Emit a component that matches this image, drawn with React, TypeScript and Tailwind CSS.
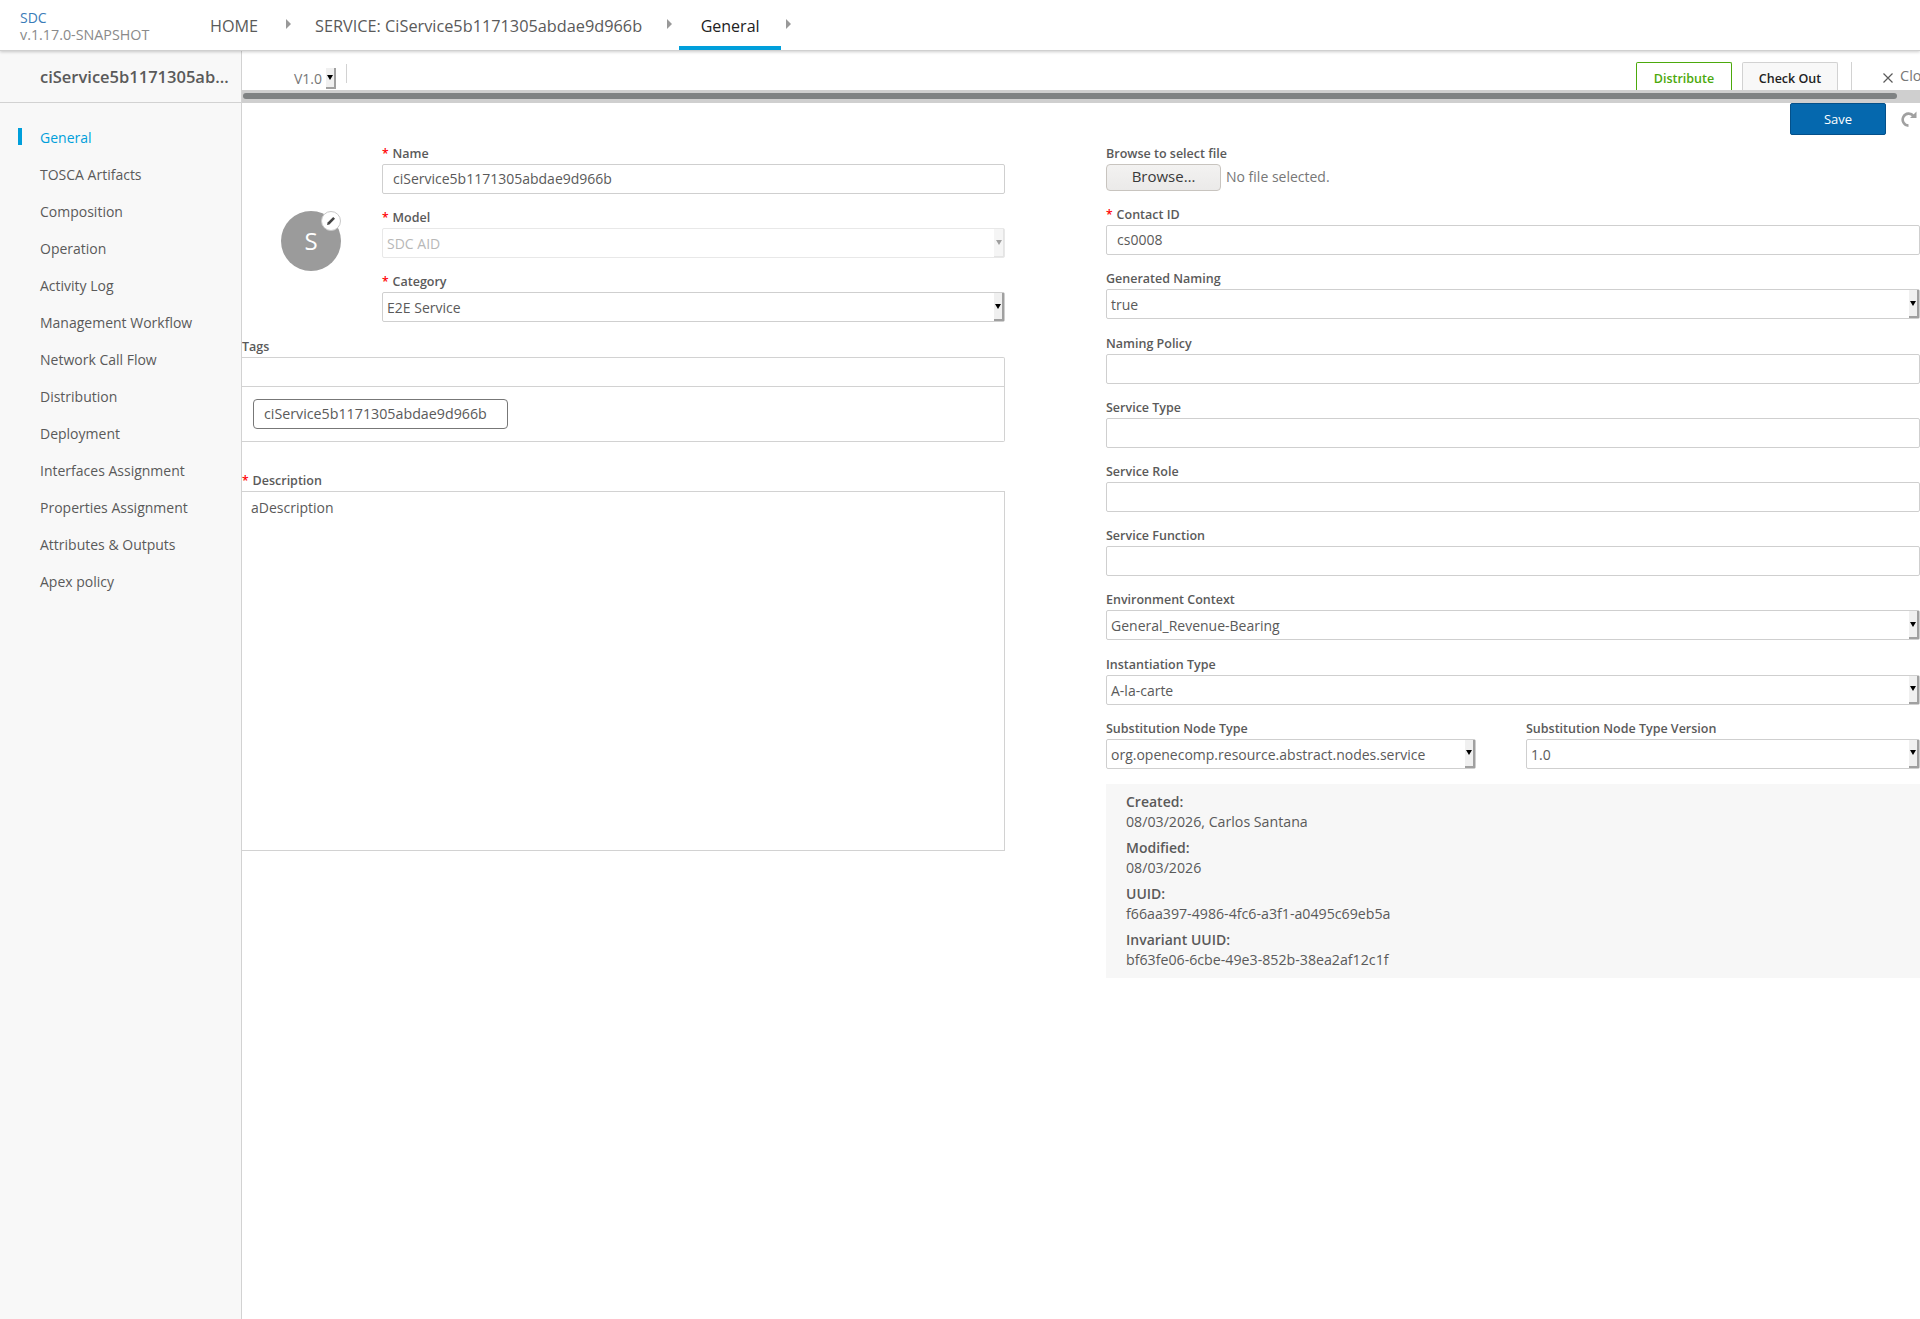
import React from 'react';

const FONT = "font-['Open_Sans',sans-serif]";

const navItems = [
  'General',
  'TOSCA Artifacts',
  'Composition',
  'Operation',
  'Activity Log',
  'Management Workflow',
  'Network Call Flow',
  'Distribution',
  'Deployment',
  'Interfaces Assignment',
  'Properties Assignment',
  'Attributes & Outputs',
  'Apex policy',
];

const Caret = () => (
  <svg width="6" height="10" viewBox="0 0 6 10" className="fill-[#999999]">
    <path d="M0 0l5 5-5 5z" />
  </svg>
);

const Label = ({ text, required }: { text: string; required?: boolean }) => (
  <div className="h-[18px] text-[12.5px] leading-[18px] font-semibold text-[#5a5a5a] whitespace-nowrap">
    {required && <span className="text-[12px] text-[#ff0000] mr-[4px]">*</span>}
    {text}
  </div>
);

const TextBox = ({ value }: { value?: string }) => (
  <div className="h-[30px] border border-[#cfcfcf] rounded-[2px] bg-white pl-[10px] text-[14px] leading-[28px] text-[#5a5a5a]">
    {value}
  </div>
);

const SelectArrow = ({ disabled }: { disabled?: boolean }) => (
  <div
    className={`absolute right-0 top-0 bottom-0 w-[10px] flex items-center justify-center ${
      disabled
        ? 'bg-[#f5f5f5] border-r border-b border-r-[#e4e4e4] border-b-[#e4e4e4]'
        : 'bg-[#f0f0f0] border-r-2 border-b-2 border-r-[#a0a0a0] border-b-[#a0a0a0]'
    }`}
  >
    <div
      className={`w-0 h-0 border-l-[3.5px] border-r-[3.5px] border-t-[5px] border-l-transparent border-r-transparent ${
        disabled ? 'border-t-[#a0a0a0]' : 'border-t-black'
      }`}
    />
  </div>
);

const SelectBox = ({ value, disabled }: { value: string; disabled?: boolean }) => (
  <div
    className={`relative h-[30px] rounded-[2px] bg-white pl-[4px] text-[14px] leading-[29px] border ${
      disabled ? 'border-[#e8e8e8] text-[#b8b8b8]' : 'border-[#cfcfcf] text-[#5a5a5a]'
    }`}
  >
    {value}
    <SelectArrow disabled={disabled} />
  </div>
);

const Field = ({ children, className }: { children: React.ReactNode; className?: string }) => (
  <div className={`flex flex-col gap-[1px] ${className ?? ''}`}>{children}</div>
);

const infoRows = [
  ['Created:', '08/03/2026, Carlos Santana'],
  ['Modified:', '08/03/2026'],
  ['UUID:', 'f66aa397-4986-4fc6-a3f1-a0495c69eb5a'],
  ['Invariant UUID:', 'bf63fe06-6cbe-49e3-852b-38ea2af12c1f'],
];

export default function App() {
  return (
    <div className={`${FONT} w-[1920px] h-[1319px] overflow-hidden bg-white flex flex-col`}>
      {/* Top bar */}
      <header className="relative z-10 h-[51px] shrink-0 bg-white border-b border-[#d0d0d0] shadow-[0_1px_3px_rgba(0,0,0,0.2)] flex">
        <div className="w-[210px] pl-[20px] pt-[9px] text-[14.3px] leading-[17px]">
          <div className="text-[#3a7cb8] text-[14px]">SDC</div>
          <div className="text-[#8a8a8a]">v.1.17.0-SNAPSHOT</div>
        </div>
        <nav className="flex items-start text-[16px] text-[#5a5a5a]">
          <div className="w-[50px] pt-[15px] leading-[22px] text-[16.2px]">HOME</div>
          <div className="ml-[26px] mt-[19px]"><Caret /></div>
          <div className="ml-[23px] pt-[15px] leading-[22px] text-[16.3px]">SERVICE: CiService5b1171305abdae9d966b</div>
          <div className="ml-[25px] mt-[19px]"><Caret /></div>
          <div className="ml-[6px] h-[50px] w-[102px] border-b-[4px] border-[#009fdb] text-center pt-[15px] leading-[22px] text-[#222222]">
            General
          </div>
          <div className="ml-[5px] mt-[19px]"><Caret /></div>
        </nav>
      </header>

      <div className="flex flex-1 min-h-0">
        {/* Sidebar */}
        <aside className="w-[242px] shrink-0 bg-[#f8f8f8] border-r border-[#d2d2d2]">
          <div className="h-[52px] border-b border-[#d2d2d2] pl-[40px] pr-[9px] pt-[15px] text-[16.5px] leading-[22px] font-semibold text-[#5a5a5a] truncate">
            ciService5b1171305abdae9d966b
          </div>
          <ul className="pt-[16px]">
            {navItems.map((item, i) => (
              <li
                key={item}
                className={`h-[37px] pl-[40px] text-[14px] leading-[37px] flex items-center ${
                  i === 0 ? 'relative text-[#009fdb]' : 'text-[#5a5a5a]'
                }`}
              >
                {i === 0 && <span className="absolute left-[18px] top-[9px] w-[4px] h-[17px] bg-[#009fdb]" />}
                {item}
              </li>
            ))}
          </ul>
        </aside>

        {/* Main */}
        <main className="flex-1 min-w-0 overflow-hidden">
          <div className="h-[39px] w-max flex items-start">
            <div className="ml-[52px] mt-[18px] w-[28px] text-[14px] leading-[20px] text-[#777777]">V1.0</div>
            <div className="ml-[4px] mt-[17px] w-[10px] h-[21px] bg-[#f0f0f0] border-r-2 border-b-2 border-[#a0a0a0] flex items-center justify-center">
              <div className="w-0 h-0 border-l-[3.5px] border-r-[3.5px] border-t-[5px] border-l-transparent border-r-transparent border-t-black" />
            </div>
            <div className="ml-[10px] mt-[13px] w-px h-[19px] bg-[#d2d2d2]" />
            <div className="ml-[1289px] mt-[11px] w-[96px] h-[28px] border border-b-0 border-[#4ca90c] rounded-t-[2px] text-center text-[12.5px] font-semibold leading-[32px] text-[#4ca90c]">
              Distribute
            </div>
            <div className="ml-[10px] mt-[11px] w-[96px] h-[28px] border border-b-0 border-[#d2d2d2] bg-[#f8f8f8] rounded-t-[2px] text-center text-[12.5px] font-semibold leading-[32px] text-[#222222]">
              Check Out
            </div>
            <div className="ml-[13px] mt-[11px] w-px h-[28px] bg-[#d2d2d2]" />
            <svg width="10" height="10" viewBox="0 0 10 10" className="ml-[31px] mt-[22px] stroke-[#5a5a5a]">
              <path d="M.5.5l9 9M9.5.5l-9 9" strokeWidth="1.2" />
            </svg>
            <span className="ml-[7px] mt-[15px] text-[14.5px] leading-[20px] text-[#777777] whitespace-nowrap">Close</span>
          </div>

          {/* Horizontal scrollbar */}
          <div className="h-[13px] bg-[#cfcfcf] pt-[3px] pl-[1px]">
            <div className="h-[6px] w-[1654px] rounded-full bg-[#7f8283]" />
          </div>

          {/* Save row */}
          <div className="h-[42px] relative">
            <div className="absolute left-[1548px] top-0 w-[96px] h-[32px] bg-[#0568ae] border border-[#04508a] rounded-[2px] text-center text-[13px] leading-[30px] text-white">
              Save
            </div>
            <svg
              width="16"
              height="16"
              viewBox="0 0 16 16"
              fill="none"
              className="absolute left-[1659px] top-[8px] stroke-[#a0a0a0]"
            >
              <path d="M7.5 14.6A6 6 0 1 1 12.5 5" strokeWidth="2.6" />
              <path d="M9 7h6.5V.5z" className="fill-[#a0a0a0] stroke-none" />
            </svg>
          </div>

          <div className="flex">
            {/* Left column */}
            <div className="w-[763px] shrink-0">
              <div className="flex">
                <div className="w-[140px] shrink-0 pl-[39px] pt-[66px]">
                  <div className="relative w-[60px] h-[60px] rounded-full bg-[#9b9b9b] flex items-center justify-center text-[24px] text-white">
                    S
                    <div className="absolute left-[40px] top-0 w-[20px] h-[20px] rounded-full bg-white border border-[#c8c8c8] flex items-center justify-center">
                      <svg width="10" height="10" viewBox="0 0 10 10" className="fill-[#444444]">
                        <path d="M7.2 1l1.8 1.8-5.6 5.6L1 9l.6-2.4z" />
                      </svg>
                    </div>
                  </div>
                </div>
                <div className="flex-1 flex flex-col gap-[15px]">
                  <Field><Label required text="Name" /><TextBox value="ciService5b1171305abdae9d966b" /></Field>
                  <Field><Label required text="Model" /><SelectBox disabled value="SDC AID" /></Field>
                  <Field><Label required text="Category" /><SelectBox value="E2E Service" /></Field>
                </div>
              </div>

              <div className="mt-[16px]">
                <Label text="Tags" />
                <div className="mt-[1px] border border-l-0 border-[#d2d2d2] rounded-r-[2px]">
                  <div className="h-[29px] border-b border-[#d2d2d2]" />
                  <div className="h-[54px] pl-[11px] pt-[12px]">
                    <div className="w-[255px] h-[30px] border border-[#777777] rounded-[4px] pl-[10px] text-[14.25px] leading-[28px] text-[#5a5a5a]">
                      ciService5b1171305abdae9d966b
                    </div>
                  </div>
                </div>
              </div>

              <div className="mt-[30px]">
                <Label required text="Description" />
                <div className="mt-[1px] h-[360px] border border-l-0 border-[#d2d2d2] pl-[9px] pt-[6px] text-[14px] leading-[20px] text-[#5a5a5a]">
                  aDescription
                </div>
              </div>
            </div>

            {/* Right column */}
            <div className="ml-[101px] w-[814px] shrink-0 flex flex-col gap-[15.2px]">
              <Field>
                <Label text="Browse to select file" />
                <div className="flex items-start text-[14px]">
                  <div className="w-[115px] h-[27px] bg-gradient-to-b from-[#f3f2f1] to-[#ebeae9] border border-[#c8c4bf] rounded-[4px] text-center text-[15px] leading-[23px] text-[#3a3a3a]">
                    Browse…
                  </div>
                  <span className="ml-[5px] leading-[25px] text-[#777777]">No file selected.</span>
                </div>
              </Field>
              <Field><Label required text="Contact ID" /><TextBox value="cs0008" /></Field>
              <Field><Label text="Generated Naming" /><SelectBox value="true" /></Field>
              <Field><Label text="Naming Policy" /><TextBox /></Field>
              <Field><Label text="Service Type" /><TextBox /></Field>
              <Field><Label text="Service Role" /><TextBox /></Field>
              <Field><Label text="Service Function" /><TextBox /></Field>
              <Field><Label text="Environment Context" /><SelectBox value="General_Revenue-Bearing" /></Field>
              <Field><Label text="Instantiation Type" /><SelectBox value="A-la-carte" /></Field>
              <div className="flex gap-[50px]">
                <Field className="w-[370px]"><Label text="Substitution Node Type" /><SelectBox value="org.openecomp.resource.abstract.nodes.service" /></Field>
                <Field className="w-[394px]"><Label text="Substitution Node Type Version" /><SelectBox value="1.0" /></Field>
              </div>
              <div className="h-[194px] bg-[#f7f7f7] pl-[20px] pt-[8px]">
                {infoRows.map(([k, v]) => (
                  <div key={k} className="h-[46px] text-[14.2px] leading-[20px]">
                    <div className="font-semibold text-[#5a5a5a] text-[14px]">{k}</div>
                    <div className="text-[#5a5a5a]">{v}</div>
                  </div>
                ))}
              </div>
            </div>
          </div>
        </main>
      </div>
    </div>
  );
}
